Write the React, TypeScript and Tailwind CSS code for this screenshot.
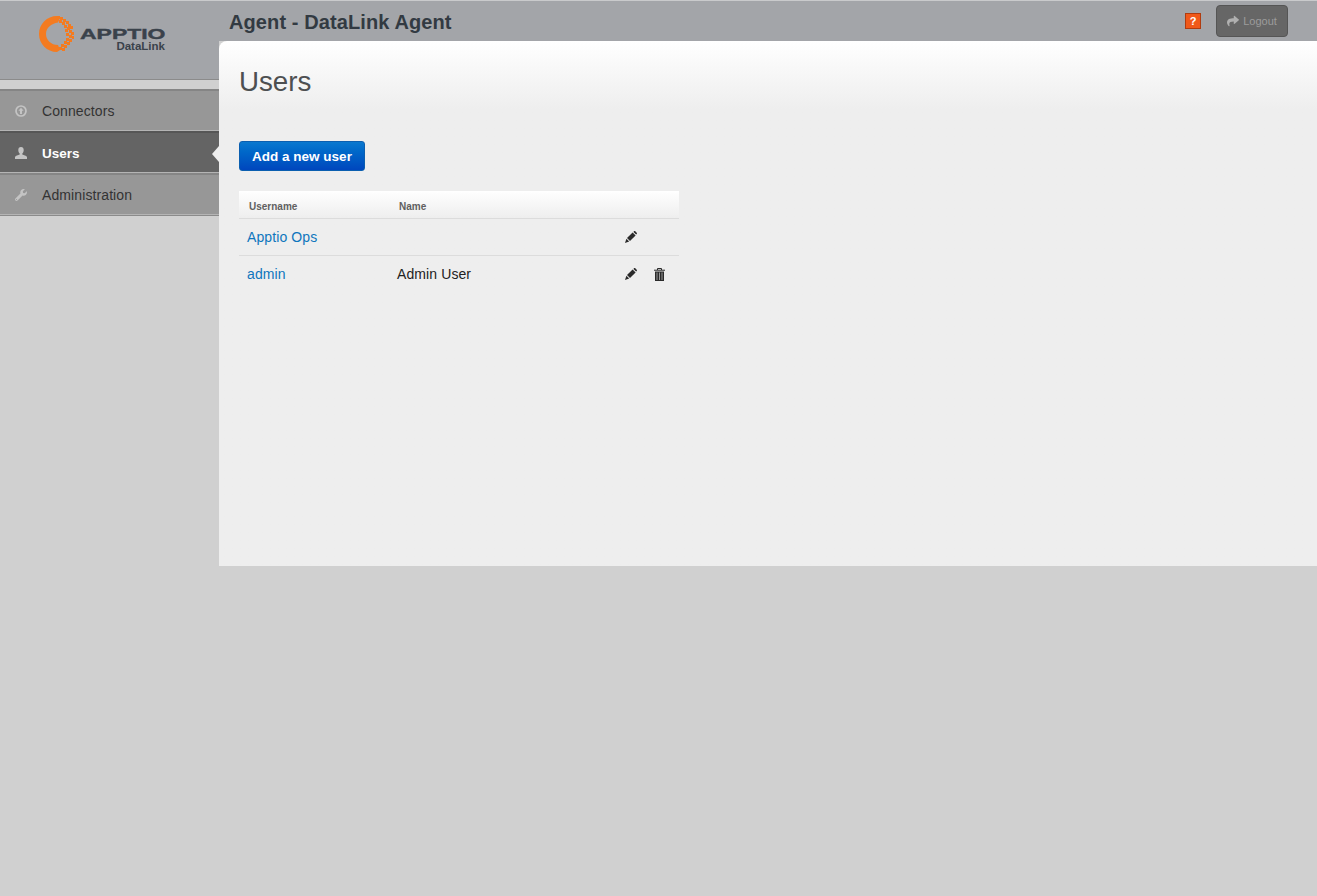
import React from 'react';
import { FaShare, FaWrench } from 'react-icons/fa';

const ConnectorIcon = ({ className }: { className?: string }) => (
    <svg viewBox="0 0 12 12" className={className}>
        <circle cx="6" cy="6" r="5" fill="none" stroke="currentColor" strokeWidth="1.7" />
        <path d="M6 2.8 L8.6 5.8 H7 V9 H5 V5.8 H3.4 Z" fill="currentColor" />
    </svg>
);

const UserIcon = ({ className }: { className?: string }) => (
    <svg viewBox="0 0 12 12" className={className}>
        <path d="M6 0 C7.8 0 8.7 1.3 8.7 3 C8.7 4.6 8 6 7.3 6.6 V7.6 C9 8.1 11.2 8.7 12 10 V12 H0 V10 C0.8 8.7 3 8.1 4.7 7.6 V6.6 C4 6 3.3 4.6 3.3 3 C3.3 1.3 4.2 0 6 0 Z" fill="currentColor" />
    </svg>
);

const navItems = [
    { id: 'connectors', label: 'Connectors', icon: ConnectorIcon },
    { id: 'users', label: 'Users', icon: UserIcon, active: true },
    { id: 'administration', label: 'Administration', icon: FaWrench },
];

const users = [
    { username: 'Apptio Ops', name: '', canDelete: false },
    { username: 'admin', name: 'Admin User', canDelete: true },
];

// the orange ring breaks up into small squares on its right side
const LogoMark = () => {
    const bits = [
        [18, 0], [21, 1], [24, 3], [20, 4], [23, 6], [27, 5], [29, 8], [25, 9], [28, 11], [31, 10],
        [26, 13], [30, 14], [32, 16], [27, 17], [30, 19], [33, 20], [27, 22], [30, 23], [25, 25], [28, 26],
        [22, 28], [25, 29], [20, 31], [23, 32],
    ];
    return (
        <svg width="35" height="36" viewBox="0 0 35 36" className="shrink-0">
            <path d="M18 0 C8 0 0 8 0 18 C0 28 8 36 18 36 L21 34 L19 29 C12 29 7 24 7 18 C7 12 12 7.5 19 6.5 L21 2 Z" fill="#f47b20" />
            {bits.map(([x, y]) => (
                <rect key={`${x}-${y}`} x={x} y={y} width="3" height="3" fill="#f47b20" />
            ))}
        </svg>
    );
};

const PencilIcon = () => (
    <svg width="12" height="12" viewBox="0 0 12 12" className="shrink-0">
        <path d="M2 7 L7.6 1.4 L10.6 4.4 L5 10 Z" fill="#2a2a2a" />
        <path d="M1.4 7.8 L0 12 L4.2 10.6 Z" fill="#2a2a2a" />
        <path d="M8.4 0.9 L9 0.3 C9.4 -0.1 9.9 -0.1 10.3 0.3 L11.7 1.7 C12.1 2.1 12.1 2.6 11.7 3 L11.1 3.6 Z" fill="#2a2a2a" />
    </svg>
);

const TrashIcon = () => (
    <svg width="11" height="13" viewBox="0 0 11 13" className="shrink-0">
        <path d="M3.5 2V0.5h4V2" fill="none" stroke="#2a2a2a" strokeWidth="1" />
        <rect x="0" y="1.7" width="11" height="1" fill="#2a2a2a" />
        <rect x="1" y="3.5" width="9" height="9.5" fill="#2a2a2a" />
        <rect x="2.5" y="4.5" width="1" height="7.5" fill="#9a9a9a" />
        <rect x="5" y="4.5" width="1" height="7.5" fill="#9a9a9a" />
        <rect x="7.5" y="4.5" width="1" height="7.5" fill="#9a9a9a" />
    </svg>
);

const Sidebar = () => (
    <aside className="w-[219px] shrink-0">
        <div className="h-[80px] bg-[#a3a5a9] border-t border-[#c9cacc] border-b border-b-[#8b8b8b] pl-[39px] pt-[15px] flex items-start">
            <LogoMark />
            <div className="ml-[6px] pt-[12px] w-[85px] text-right text-[#3a424b]">
                <div className="text-[15px] leading-[12px] font-bold [-webkit-text-stroke:0.4px_#3a424b] [transform:scaleX(1.53)] origin-left text-left">APPTIO</div>
                <div className="mt-[1px] text-[11.5px] leading-[10px] font-bold">DataLink</div>
            </div>
        </div>
        <nav className="mt-[9px]">
            {navItems.map(item => (
                <div
                    key={item.id}
                    className={`relative h-[42px] flex items-center border-t-2 border-b border-b-[#b4b4b4] ${
                        item.active
                            ? 'bg-[#646464] border-t-[#565656] text-white font-bold'
                            : 'bg-[#979797] border-t-[#858585] text-[#333333]'
                    }`}
                >
                    <item.icon className="ml-[15px] w-[12px] h-[12px] text-[#c4c4c4]" />
                    <span className={`ml-[15px] ${item.active ? 'pt-[3px] text-[13.5px]' : 'pt-[1px] text-[14px] tracking-[0.1px]'}`}>{item.label}</span>
                    {item.active && (
                        <span className="absolute right-0 top-[13px] border-y-[8px] border-y-transparent border-r-[7px] border-r-[#eeeeee]" />
                    )}
                </div>
            ))}
            <div className="h-px bg-[#8a8a8a]" />
        </nav>
    </aside>
);

const TopBar = () => (
    <header className="h-[41px] bg-[#a3a5a9] border-t border-[#c9cacc] flex items-start pl-[10px] pr-[29px]">
        <h1 className="mt-[8px] text-[20px] leading-[26px] font-bold tracking-[0.1px] text-[#323a42]">Agent - DataLink Agent</h1>
        <div className="ml-auto flex items-start">
            <span className="mt-[12px] w-[16px] h-[16px] bg-[#f0591a] border border-[#b03c10] text-white text-[11px] leading-[14px] font-bold text-center">?</span>
            <button className="ml-[15px] mt-[4px] w-[72px] h-[32px] rounded-[4px] bg-[#666666] border border-[#555555] text-[#9c9c9c] text-[11px] flex items-center justify-center">
                <FaShare className="w-[12px] h-[12px] mr-[4px] text-[#b0b0b0]" />
                Logout
            </button>
        </div>
    </header>
);

const UsersTable = () => (
    <div className="mt-[20px] w-[440px]">
        <div className="h-[28px] flex items-center pt-[3px] border-b border-[#dcdcdc] bg-gradient-to-b from-white to-[#eeeeee] text-[10px] font-bold text-[#606060]">
            <span className="w-[160px] pl-[10px]">Username</span>
            <span>Name</span>
        </div>
        {users.map((user, i) => (
            <div key={user.username} className={`h-[37px] flex items-center text-[14px] tracking-[0.1px] border-b ${i === 0 ? 'border-[#dcdcdc]' : 'border-transparent'}`}>
                <a href="#" className="w-[158px] pl-[8px] text-[#0f76bd]">{user.username}</a>
                <span className="text-[#222222]">{user.name}</span>
                <span className="ml-auto w-[54px] flex items-center gap-[17px]">
                    <PencilIcon />
                    {user.canDelete && <TrashIcon />}
                </span>
            </div>
        ))}
    </div>
);

const App: React.FC = () => (
    <div className="min-h-[896px] bg-[#d0d0d0] flex font-['Liberation_Sans',Arial,sans-serif]">
        <Sidebar />
        <main className="flex-1 min-w-0">
            <TopBar />
            <section className="h-[525px] rounded-tl-[8px] bg-gradient-to-b from-white to-[#eeeeee] to-[13%] pt-[25px] pl-[20px]">
                <h2 className="text-[27.7px] leading-[32px] text-[#4d4f51]">Users</h2>
                <button className="mt-[43px] block h-[30px] w-[126px] pt-[2px] rounded-[3px] bg-gradient-to-b from-[#0a78cf] to-[#0046bd] border border-[#0b5fb0] text-white text-[13.5px] font-bold">
                    Add a new user
                </button>
                <UsersTable />
            </section>
        </main>
    </div>
);

export default App;
